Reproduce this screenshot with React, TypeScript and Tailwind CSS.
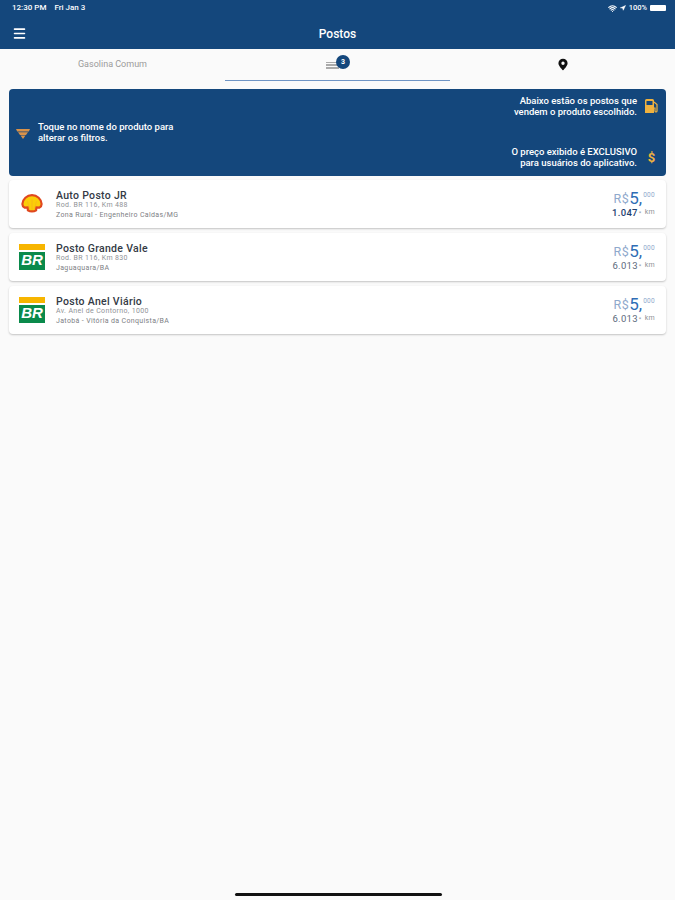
import { Menu, Wifi, Navigation } from 'lucide-react';

const stations = [
	{ name: 'Auto Posto JR', road: 'Rod. BR 116, Km 488', city: 'Zona Rural - Engenheiro Caldas/MG', brand: 'shell', dist: '1.047', bold: true },
	{ name: 'Posto Grande Vale', road: 'Rod. BR 116, Km 830', city: 'Jaguaquara/BA', brand: 'br', dist: '6.013', bold: false },
	{ name: 'Posto Anel Viário', road: 'Av. Anel de Contorno, 1000', city: 'Jatobá - Vitória da Conquista/BA', brand: 'br', dist: '6.013', bold: false },
];

const ShellLogo = () => (
	<svg viewBox="0 0 24 22" className="w-[22px] h-[20px]">
		<path
			d="M12 1.200C6.500 1.200 1.600 5.600 1.400 11c0 1.500 1 3.200 2.400 4l3.400-.2.3 3.200c1.300.8 2.800 1.200 4.500 1.200s3.200-.4 4.500-1.200l.3-3.200 3.400.2c1.400-.8 2.400-2.500 2.400-4C22.400 5.600 17.500 1.200 12 1.200z"
			fill="#fbce07"
			stroke="#e0481f"
			strokeWidth="2.400"
		/>
		<path d="M12 17V6M9.500 17 7 8M14.500 17 17 8" stroke="#f5b01f" strokeWidth="0.700" fill="none" />
	</svg>
);

const BrLogo = () => (
	<div className="w-[26px] flex flex-col gap-[2px]">
		<div className="h-[6px] bg-[#f7b500]" />
		<div className="h-[18px] bg-[#0a8a4b] border border-[#0a8a4b] flex items-start justify-center overflow-hidden">
			<span className="text-[15px] leading-[14px] font-bold italic text-white font-['Liberation_Sans',sans-serif]">BR</span>
		</div>
	</div>
);

const Row = ({ s }: { s: (typeof stations)[number] }) => (
	<div className="h-[48px] bg-white rounded-sm shadow-[0_1px_2px_rgba(0,0,0,0.22)] flex items-center pl-[10px] pr-[11px]">
		<div className="w-[26px] flex justify-center">{s.brand === 'shell' ? <ShellLogo /> : <BrLogo />}</div>
		<div className="ml-[11px] flex-1 pt-[1px]">
			<div className="text-[10.5px] leading-[12px] font-medium text-[#333a45] tracking-[0.3px] translate-y-[1px]">{s.name}</div>
			<div className="text-[7px] leading-[9px] text-[#8f9296] tracking-[0.35px]">{s.road}</div>
			<div className="text-[7px] leading-[10px] text-[#7d8084] tracking-[0.35px]">{s.city}</div>
		</div>
		<div className="flex flex-col items-end">
			<div className="flex items-start text-[#8fa9cc] leading-none">
				<span className="text-[12.5px] mt-[3px] tracking-[0.5px]">R$</span>
				<span className="text-[17px] text-[#2f6db5]">5,</span>
				<span className="text-[6.5px] ml-[1px] mt-[2px] tracking-[0.3px]">000</span>
			</div>
			<div className="flex items-start text-[9.5px] leading-[11px] tracking-[0.3px]">
				<span className={s.bold ? 'text-[#1f3f70] font-medium' : 'text-[#5c6a7c]'}>{s.dist}</span>
				<span className="text-[6px] text-[#8f9296] ml-[1px]">*</span>
				<span className="text-[7px] text-[#8f9296] ml-[3px]">km</span>
			</div>
		</div>
	</div>
);

export default function App() {
	return (
		<div className="w-[675px] h-[900px] bg-[#fafafa] flex flex-col font-['Roboto',sans-serif] relative">
			<header className="h-[49px] bg-[#14477c] text-white flex flex-col shrink-0">
				<div className="h-[16px] flex items-center justify-between pl-[12px] pr-[9px] text-[8px] font-medium">
					<span className="flex gap-[8px]">
						<span>12:30 PM</span>
						<span>Fri Jan 3</span>
					</span>
					<div className="flex items-center gap-[3px]">
						<Wifi size={9} strokeWidth={3} />
						<Navigation size={6} fill="white" />
						<span className="text-[7.5px]">100%</span>
						<div className="w-[16px] h-[6px] bg-white rounded-[1px]" />
					</div>
				</div>
				<div className="flex-1 flex items-center relative px-[12px] pt-[1px]">
					<Menu size={15} strokeWidth={2.5} />
					<span className="absolute inset-x-0 top-[9px] text-center text-[12px] font-medium">Postos</span>
				</div>
			</header>

			<div className="h-[32px] flex shrink-0 text-[9px] text-[#9a9a9a]">
				<div className="w-[225px] flex items-center justify-center pb-[1px]">Gasolina Comum</div>
				<div className="w-[225px] flex items-center justify-center border-b border-[#6f94c4] relative">
					<div className="flex flex-col gap-[1px] w-[13px] mt-[2px] mr-[10px]">
						<div className="h-[1px] bg-[#aaa]" />
						<div className="h-[2px] bg-[#aaa]" />
						<div className="h-[2px] bg-[#aaa]" />
					</div>
					<div className="absolute left-[111px] top-[6px] w-[14px] h-[14px] rounded-full bg-[#14477c] text-white text-[7px] flex items-center justify-center font-bold">
						3
					</div>
				</div>
				<div className="w-[225px] flex items-center justify-center pb-[1px]">
					<svg viewBox="0 0 12 14" className="w-[10px] h-[13px]">
						<path fillRule="evenodd" d="M6 0a5.500 5.500 0 0 0-5.500 5.500C.5 9 6 14 6 14s5.500-5 5.500-8.500A5.500 5.500 0 0 0 6 0zm0 3.500a2 2 0 1 1 0 4 2 2 0 0 1 0-4z" fill="#111" />
					</svg>
				</div>
			</div>

			<div className="mx-[9px] mt-[8px] h-[87px] bg-[#14477c] rounded-sm flex justify-between text-white text-[9.5px] leading-[11px] font-medium">
				<div className="flex items-center pl-[7px] gap-[8px] pb-[2px]">
					<svg viewBox="0 0 14 10" className="w-[14px] h-[10px] translate-y-[2px]">
						<path d="M0 0h14l-1.200 2.500H1.200zM2 3.200h10L10 6H4zM4.500 6.600h5L7 10z" fill="#d9924a" />
					</svg>
					<p>
						Toque no nome do produto para
						<br />
						alterar os filtros.
					</p>
				</div>
				<div className="flex flex-col justify-between items-end pt-[6px] pb-[8px] pr-[8px]">
					<div className="flex items-center gap-[7px] text-right">
						<p>
							Abaixo estão os postos que
							<br />
							vendem o produto escolhido.
						</p>
						<svg viewBox="0 0 14 14" className="w-[14px] h-[14px]">
							<path fillRule="evenodd" d="M1 1.500A1.500 1.500 0 0 1 2.500 0h6A1.500 1.500 0 0 1 10 1.500V14H1zM2.500 2v4h6V2z" fill="#f0b23f" />
							<path d="M10 3l3 2.500V12a1 1 0 0 1-2 0V9h-1" stroke="#f0b23f" strokeWidth="1.200" fill="none" />
						</svg>
					</div>
					<div className="flex items-center gap-[8px] text-right">
						<p>
							O preço exibido é EXCLUSIVO
							<br />
							para usuários do aplicativo.
						</p>
						<span className="text-[13px] text-[#f0b23f] font-bold w-[13px] text-center">$</span>
					</div>
				</div>
			</div>

			<div className="mx-[9px] mt-[4px] flex flex-col gap-[5px]">
				{stations.map((s) => (
					<Row key={s.name} s={s} />
				))}
			</div>

			<div className="absolute bottom-[4px] left-[235px] w-[207px] h-[3px] rounded-full bg-[#111]" />
		</div>
	);
}
